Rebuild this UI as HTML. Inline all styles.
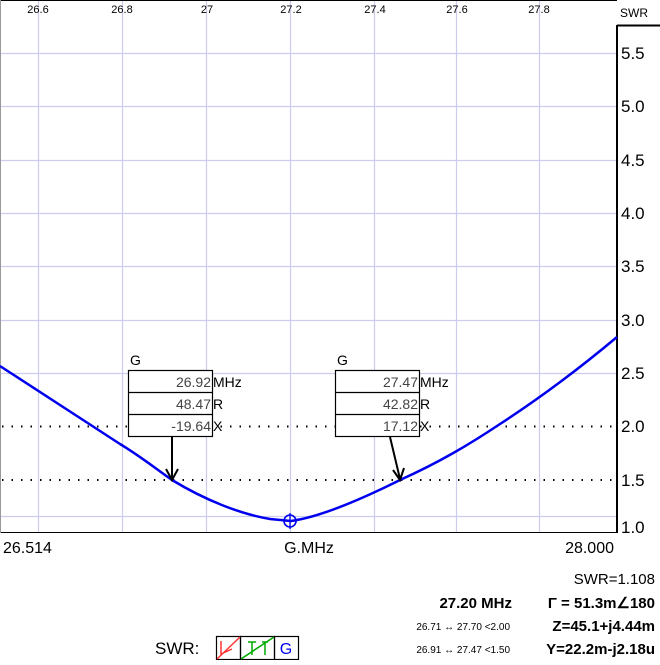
<!DOCTYPE html><html><head><style>
body{margin:0;background:#fff;width:660px;height:660px;overflow:hidden;font-family:"Liberation Sans",sans-serif}
svg text{font-family:"Liberation Sans",sans-serif}
</style></head><body>
<svg width="660" height="660" viewBox="0 0 660 660" xmlns="http://www.w3.org/2000/svg">
<g stroke="#ccccee" stroke-width="1.2">
<line x1="38.5" y1="0" x2="38.5" y2="533"/><line x1="122.5" y1="0" x2="122.5" y2="533"/><line x1="206.5" y1="0" x2="206.5" y2="533"/><line x1="290.5" y1="0" x2="290.5" y2="533"/><line x1="374.5" y1="0" x2="374.5" y2="533"/><line x1="456.5" y1="0" x2="456.5" y2="533"/><line x1="539.5" y1="0" x2="539.5" y2="533"/>
<line x1="0" y1="53.5" x2="617" y2="53.5"/><line x1="0" y1="106.5" x2="617" y2="106.5"/><line x1="0" y1="160.5" x2="617" y2="160.5"/><line x1="0" y1="213.5" x2="617" y2="213.5"/><line x1="0" y1="266.5" x2="617" y2="266.5"/><line x1="0" y1="320.5" x2="617" y2="320.5"/><line x1="0" y1="373.5" x2="617" y2="373.5"/><line x1="0" y1="516.5" x2="617" y2="516.5"/>
</g>
<g stroke="#000" stroke-width="2" stroke-dasharray="1.5 8"><line x1="2" y1="426.5" x2="617" y2="426.5"/><line x1="2" y1="480" x2="617" y2="480"/></g>
<line x1="0" y1="0.5" x2="617" y2="0.5" stroke="#000"/>
<line x1="617" y1="25" x2="617" y2="533" stroke="#000" stroke-width="2"/>
<line x1="617" y1="25.5" x2="660" y2="25.5" stroke="#000" stroke-width="2"/>
<line x1="0" y1="532.5" x2="617" y2="532.5" stroke="#000"/>
<line x1="0.5" y1="0" x2="0.5" y2="533" stroke="#999"/>
<g font-size="11" fill="#000" text-anchor="middle">
<text x="38" y="13">26.6</text><text x="122" y="13">26.8</text><text x="207" y="13">27</text><text x="291" y="13">27.2</text><text x="375" y="13">27.4</text><text x="457" y="13">27.6</text><text x="539" y="13">27.8</text>
</g>
<text x="620" y="17" font-size="12">SWR</text>
<g font-size="17" fill="#000">
<text x="621" y="59">5.5</text><text x="621" y="112">5.0</text><text x="621" y="166">4.5</text><text x="621" y="219">4.0</text><text x="621" y="272">3.5</text><text x="621" y="326">3.0</text><text x="621" y="379">2.5</text><text x="621" y="432">2.0</text><text x="621" y="486">1.5</text><text x="621" y="533">1.0</text>
</g>
<path d="M0,366 C40,392 80,418 120,444 C140,456 155,468 172,480 C205,500 240,514 270,519 L291,521 C320,517 360,500 400,480 C440,462 470,444 500,424 C540,398 580,368 617,337" fill="none" stroke="#0000ee" stroke-width="2.5"/>
<circle cx="290" cy="521" r="6" fill="none" stroke="#0000ee" stroke-width="1.6"/>
<line x1="290" y1="513" x2="290" y2="529" stroke="#0000ee" stroke-width="1.3"/><line x1="283" y1="521" x2="297" y2="521" stroke="#0000ee" stroke-width="1.3"/>
<g stroke="#000" stroke-width="1.2" fill="#fff">
<rect x="128.5" y="370.5" width="84" height="66"/><line x1="128" y1="392.5" x2="212" y2="392.5"/><line x1="128" y1="414.5" x2="212" y2="414.5"/>
<rect x="335.5" y="370.5" width="84" height="66"/><line x1="335" y1="392.5" x2="419" y2="392.5"/><line x1="335" y1="414.5" x2="419" y2="414.5"/>
</g>
<g stroke="#000" stroke-width="2" fill="none">
<line x1="172" y1="437" x2="172" y2="479"/><path d="M166,469 L172,480 L178,469"/>
<line x1="390" y1="437" x2="400" y2="479"/><path d="M393,470 L400,480 L404,468"/>
</g>
<g font-size="14">
<text x="130" y="365">G</text><text x="337" y="365">G</text>
<g fill="#444" text-anchor="end"><text x="211" y="387">26.92</text><text x="211" y="409">48.47</text><text x="211" y="431">-19.64</text>
<text x="418" y="387">27.47</text><text x="418" y="409">42.82</text><text x="418" y="431">17.12</text></g>
<text x="213" y="387">MHz</text><text x="213" y="409">R</text><text x="213" y="431">X</text>
<text x="420" y="387">MHz</text><text x="420" y="409">R</text><text x="420" y="431">X</text>
</g>
<g font-size="16"><text x="3" y="553">26.514</text><text x="309" y="553" text-anchor="middle">G.MHz</text><text x="614" y="553" text-anchor="end">28.000</text></g>
<g font-size="15" text-anchor="end" font-weight="bold">
<text x="655" y="584" font-weight="normal">SWR=1.108</text>
<text x="512" y="608">27.20 MHz</text>
<text x="655" y="608">Γ = 51.3m∠180</text>
<text x="655" y="631">Z=45.1+j4.44m</text>
<text x="655" y="654">Y=22.2m-j2.18u</text>
</g>
<g font-size="10" text-anchor="end"><text x="510" y="630">26.71 ↔ 27.70 &lt;2.00</text><text x="510" y="653">26.91 ↔ 27.47 &lt;1.50</text></g>
<text x="155" y="654" font-size="17">SWR:</text>
<g stroke="#000" fill="none" stroke-width="1.2"><rect x="216.5" y="636.5" width="24" height="23"/><rect x="240.5" y="636.5" width="34" height="23"/><rect x="274.5" y="636.5" width="24" height="23"/></g>
<path d="M217,659 L240,637 M221,641 L221,654 L232,649" stroke="#ff3333" stroke-width="1.5" fill="none"/>
<path d="M241,659 L274,637 M248,642 L256,642 M252,642 L252,655 M262,642 L268,642 M265,642 L265,655" stroke="#00aa00" stroke-width="1.5" fill="none"/>
<text x="286" y="654" font-size="16" fill="#0000ee" text-anchor="middle">G</text>
</svg>
</body></html>
